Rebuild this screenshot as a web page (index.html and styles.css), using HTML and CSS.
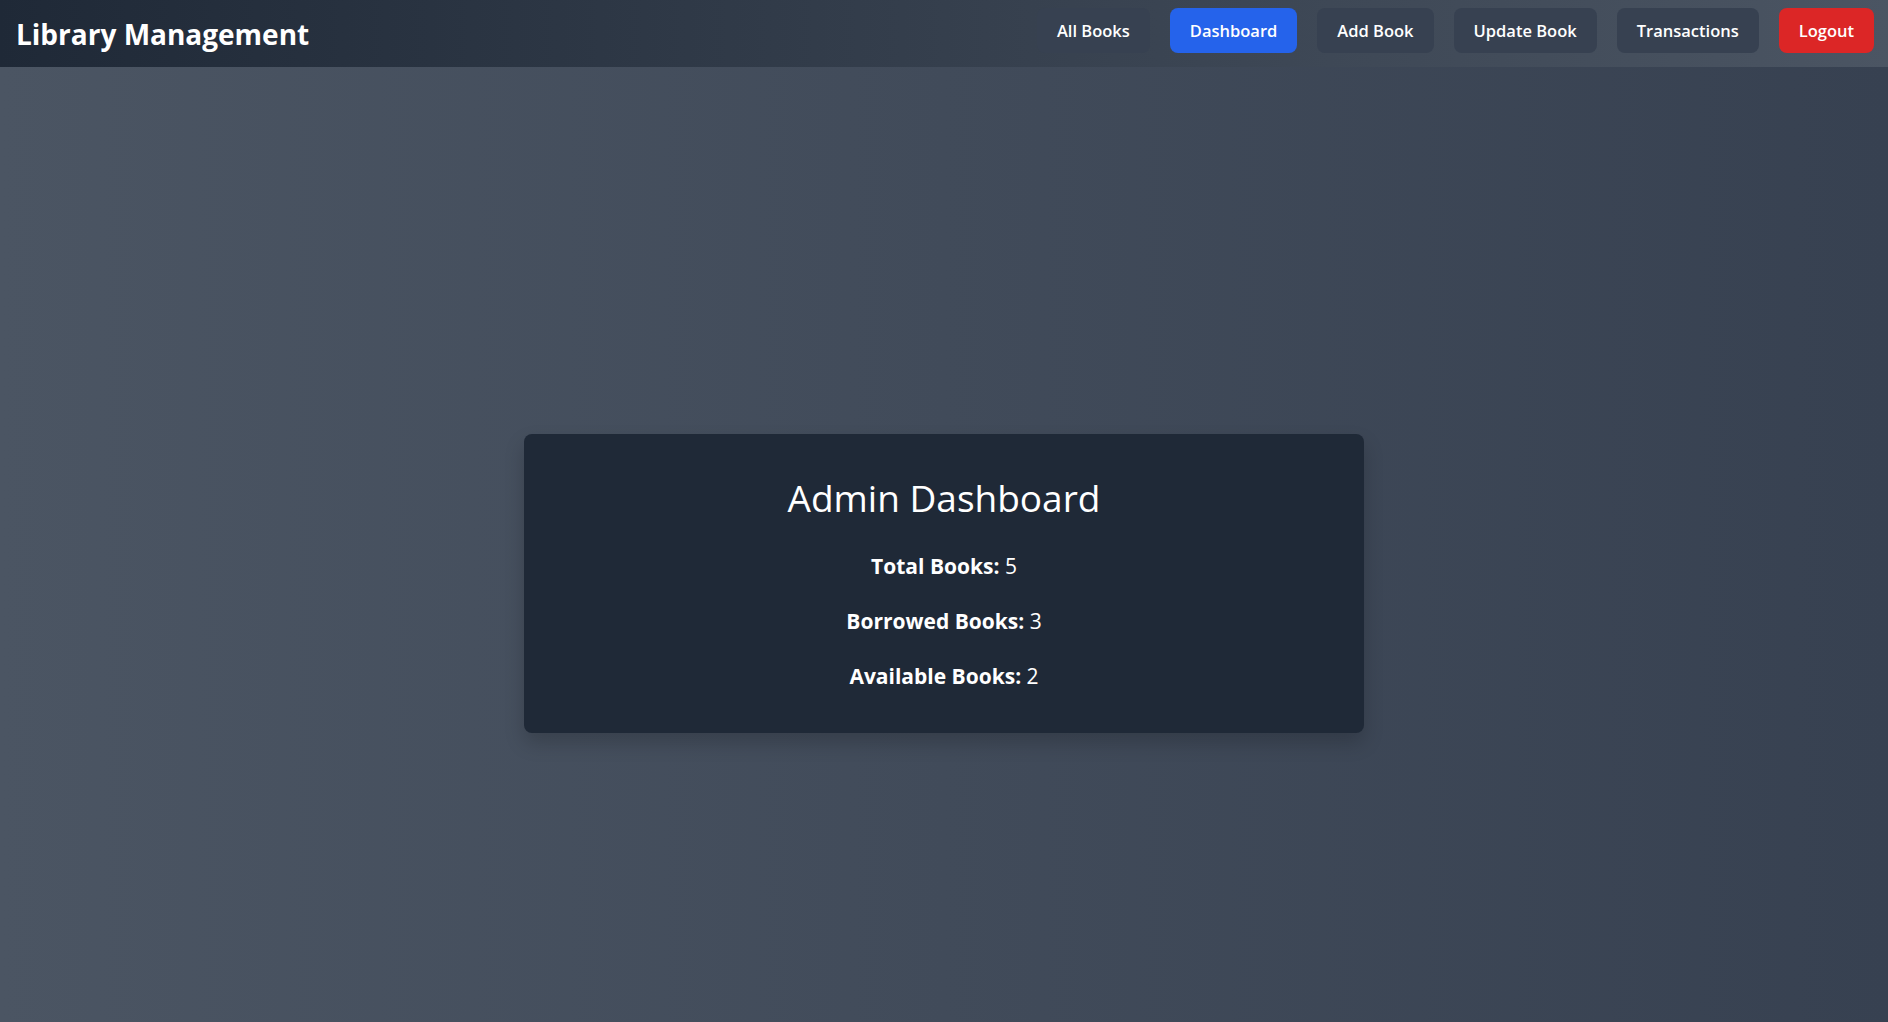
FILE: index.html
```html
<!DOCTYPE html>
<html lang="en">
<head>
<meta charset="utf-8">
<title>Library Management</title>
<link rel="stylesheet" href="styles.css">
</head>
<body>
<nav class="navbar">
  <div class="brand">Library Management</div>
  <div class="nav-links">
    <a class="nav-btn" href="#">All Books</a>
    <a class="nav-btn active" href="#">Dashboard</a>
    <a class="nav-btn" href="#">Add Book</a>
    <a class="nav-btn" href="#">Update Book</a>
    <a class="nav-btn" href="#">Transactions</a>
    <a class="nav-btn logout" href="#">Logout</a>
  </div>
</nav>
<main class="main">
  <section class="card">
    <h1 class="card-title">Admin Dashboard</h1>
    <div class="stats">
      <p class="stat"><strong>Total Books:</strong> 5</p>
      <p class="stat"><strong>Borrowed Books:</strong> 3</p>
      <p class="stat"><strong>Available Books:</strong> 2</p>
    </div>
  </section>
</main>
</body>
</html>
```
FILE: styles.css
```css
* { box-sizing: border-box; }
html, body { margin: 0; padding: 0; height: 100%; overflow: hidden; }
body {
  font-family: "Open Sans", "Noto Sans", sans-serif;
  color: #ffffff;
  background: linear-gradient(to right, #4b5563, #374151);
}
.navbar {
  height: 67px;
  display: flex;
  align-items: flex-start;
  justify-content: space-between;
  padding: 8px 14px 0 16px;
  background: linear-gradient(to right, #1f2937, #4b5563);
}
.brand {
  align-self: center;
  margin-top: -8px;
  font-size: 28px;
  font-weight: 700;
  letter-spacing: 0;
}
.nav-links {
  display: flex;
  gap: 20px;
}
.nav-btn {
  display: block;
  height: 45px;
  line-height: 45px;
  padding: 0 20px;
  border-radius: 8px;
  background: #374151;
  color: #ffffff;
  text-decoration: none;
  font-size: 16.5px;
  font-weight: 600;
}
.nav-btn.active { background: #2563eb; }
.nav-btn.logout { background: #dc2626; }
.main {
  height: calc(100% - 67px);
  display: flex;
  justify-content: center;
  align-items: flex-start;
  padding-top: 367px;
}
.card {
  width: 840px;
  height: 299px;
  background: #1f2937;
  border-radius: 8px;
  box-shadow: 0 10px 20px rgba(0, 0, 0, 0.18);
  padding: 38px 32px 32px;
  text-align: center;
}
.card-title {
  margin: 0;
  font-size: 37px;
  font-weight: 400;
  line-height: 52px;
}
.stats {
  margin-top: 28px;
  display: flex;
  flex-direction: column;
  gap: 27px;
}
.stat {
  margin: 0;
  font-size: 21px;
  line-height: 28px;
}
.stat strong { font-weight: 700; }
```
